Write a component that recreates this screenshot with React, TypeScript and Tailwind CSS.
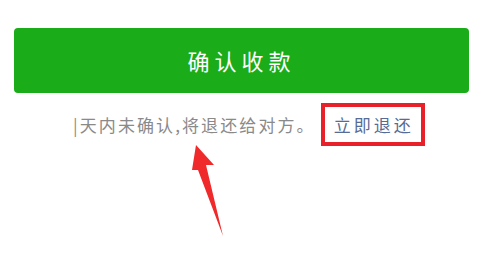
const cjk = { fontFamily: '"Noto Sans CJK SC", "Noto Sans", sans-serif' };

function Arrow() {
  return (
    <svg
      className="absolute left-0 top-0"
      width="485"
      height="268"
      viewBox="0 0 485 268"
    >
      <polygon
        points="196,145 214,165 206,165 223,236 198,170 192,170"
        fill="#f02a2a"
      />
    </svg>
  );
}

export default function App() {
  return (
    <div className="relative w-[485px] h-[268px] bg-white overflow-hidden" style={cjk}>
      <div className="pt-[28px] px-[14px]">
        <button className="w-[455px] h-[65px] rounded-[4px] bg-[#1aac19] text-white text-[22px] tracking-[5px] flex items-center justify-center">
          确认收款
        </button>
      </div>
      <div className="mt-[10px] pl-[73px] flex items-center">
        <span className="text-[17px] tracking-[2.1px] text-[#8a8a8a] whitespace-nowrap">
          |天内未确认,将退还给对方。
        </span>
        <div className="ml-[5px] w-[104px] h-[43px] border-4 border-[#e8202a] flex items-center pl-[9px]">
          <span className="text-[17px] tracking-[3px] text-[#576b95] whitespace-nowrap">
            立即退还
          </span>
        </div>
      </div>
      <Arrow />
    </div>
  );
}
